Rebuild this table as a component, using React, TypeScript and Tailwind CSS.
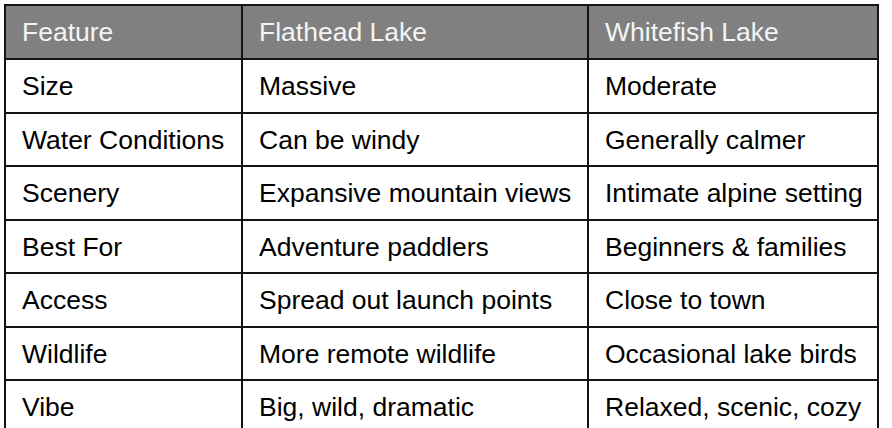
const headers = ['Feature', 'Flathead Lake', 'Whitefish Lake'];

const rows: string[][] = [
    ['Size', 'Massive', 'Moderate'],
    ['Water Conditions', 'Can be windy', 'Generally calmer'],
    ['Scenery', 'Expansive mountain views', 'Intimate alpine setting'],
    ['Best For', 'Adventure paddlers', 'Beginners & families'],
    ['Access', 'Spread out launch points', 'Close to town'],
    ['Wildlife', 'More remote wildlife', 'Occasional lake birds'],
    ['Vibe', 'Big, wild, dramatic', 'Relaxed, scenic, cozy'],
];

const App = () => {
    return (
        <div className="bg-white w-[892px] h-[428px] overflow-hidden pl-[4px] pt-[4px]" style={{ fontFamily: '"Liberation Sans", Arial, sans-serif' }}>
            <div className="grid grid-cols-[237px_346px_290px] w-[875px] border-l-2 border-t-2 border-[#141414]">
                {/* Header row */}
                {headers.map((h) => (
                    <div
                        key={h}
                        className="h-[54px] flex items-center pl-[16px] pt-[2px] bg-[#808080] text-[#f4f4f4] text-[26.5px] border-r-2 border-b-2 border-[#141414]"
                    >
                        {h}
                    </div>
                ))}

                {/* Body rows */}
                {rows.map((row) =>
                    row.map((cell, i) => (
                        <div
                            key={row[0] + i}
                            className="h-[53.5px] flex items-center pl-[16px] pt-[3px] text-black text-[26.5px] whitespace-nowrap border-r-2 border-b-2 border-[#141414]"
                        >
                            {cell}
                        </div>
                    ))
                )}
            </div>
        </div>
    );
};

export default App;
